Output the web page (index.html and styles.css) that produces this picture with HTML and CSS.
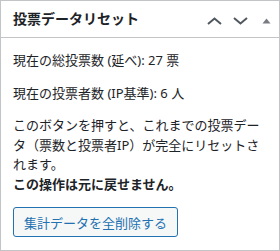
FILE: index.html
```html
<!DOCTYPE html>
<html lang="ja">
<head>
    <meta charset="UTF-8">
    <meta name="viewport" content="width=device-width, initial-scale=1.0">
    <title>投票データリセット</title>
    <link rel="stylesheet" href="styles.css">
</head>
<body>
<div class="postbox">
    <div class="postbox-header">
        <h2 class="hndle">投票データリセット</h2>
        <div class="handle-actions">
            <button type="button" class="handle-btn" aria-label="上へ移動">
                <svg width="15" height="8" viewBox="0 0 15 8"><polyline points="1,7 7.5,1.5 14,7" fill="none" stroke="#50575e" stroke-width="2"/></svg>
            </button>
            <button type="button" class="handle-btn" aria-label="下へ移動">
                <svg width="15" height="8" viewBox="0 0 15 8"><polyline points="1,1 7.5,6.5 14,1" fill="none" stroke="#50575e" stroke-width="2"/></svg>
            </button>
            <button type="button" class="handle-btn" aria-label="パネルを切り替え">
                <svg width="9" height="6" viewBox="0 0 9 6"><polygon points="0.5,5.5 4.5,0.5 8.5,5.5" fill="#787c82"/></svg>
            </button>
        </div>
    </div>
    <div class="inside">
        <p>現在の総投票数 (延べ): 27 票</p>
        <p>現在の投票者数 (IP基準): 6 人</p>
        <p>このボタンを押すと、これまでの投票データ（票数と投票者IP）が完全にリセットされます。<br><strong>この操作は元に戻せません。</strong></p>
        <form onsubmit="return false;">
            <button type="submit" class="button">集計データを全削除する</button>
        </form>
    </div>
</div>
</body>
</html>
```

FILE: styles.css
```css
body {
    margin: 0;
    font-family: "Noto Sans", "Noto Sans CJK JP", sans-serif;
    font-size: 13px;
    line-height: 1.5;
    color: #1d2327;
    background: #fff;
}

.postbox {
    width: 280px;
    height: 251px;
    box-sizing: border-box;
    border: 1px solid #c3c4c7;
    background: #fff;
}

.postbox-header {
    display: flex;
    align-items: center;
    justify-content: space-between;
    height: 36px;
    border-bottom: 1px solid #c3c4c7;
}

.hndle {
    margin: 0;
    padding: 0 12px;
    font-size: 14px;
    font-weight: 700;
    line-height: 1.4;
}

.handle-actions {
    display: flex;
    height: 100%;
}

.handle-btn {
    width: 26px;
    height: 100%;
    padding: 4px 0 0;
    border: none;
    background: none;
    display: flex;
    align-items: center;
    justify-content: center;
    cursor: pointer;
}

.inside {
    padding: 0 12px 12px;
}

.inside p {
    margin: 13px 0;
}

.button {
    height: 30px;
    padding: 0 10px;
    font-family: inherit;
    font-size: 13px;
    color: #2271b1;
    background: #f6f7f7;
    border: 1px solid #2271b1;
    border-radius: 3px;
    cursor: pointer;
}
```
